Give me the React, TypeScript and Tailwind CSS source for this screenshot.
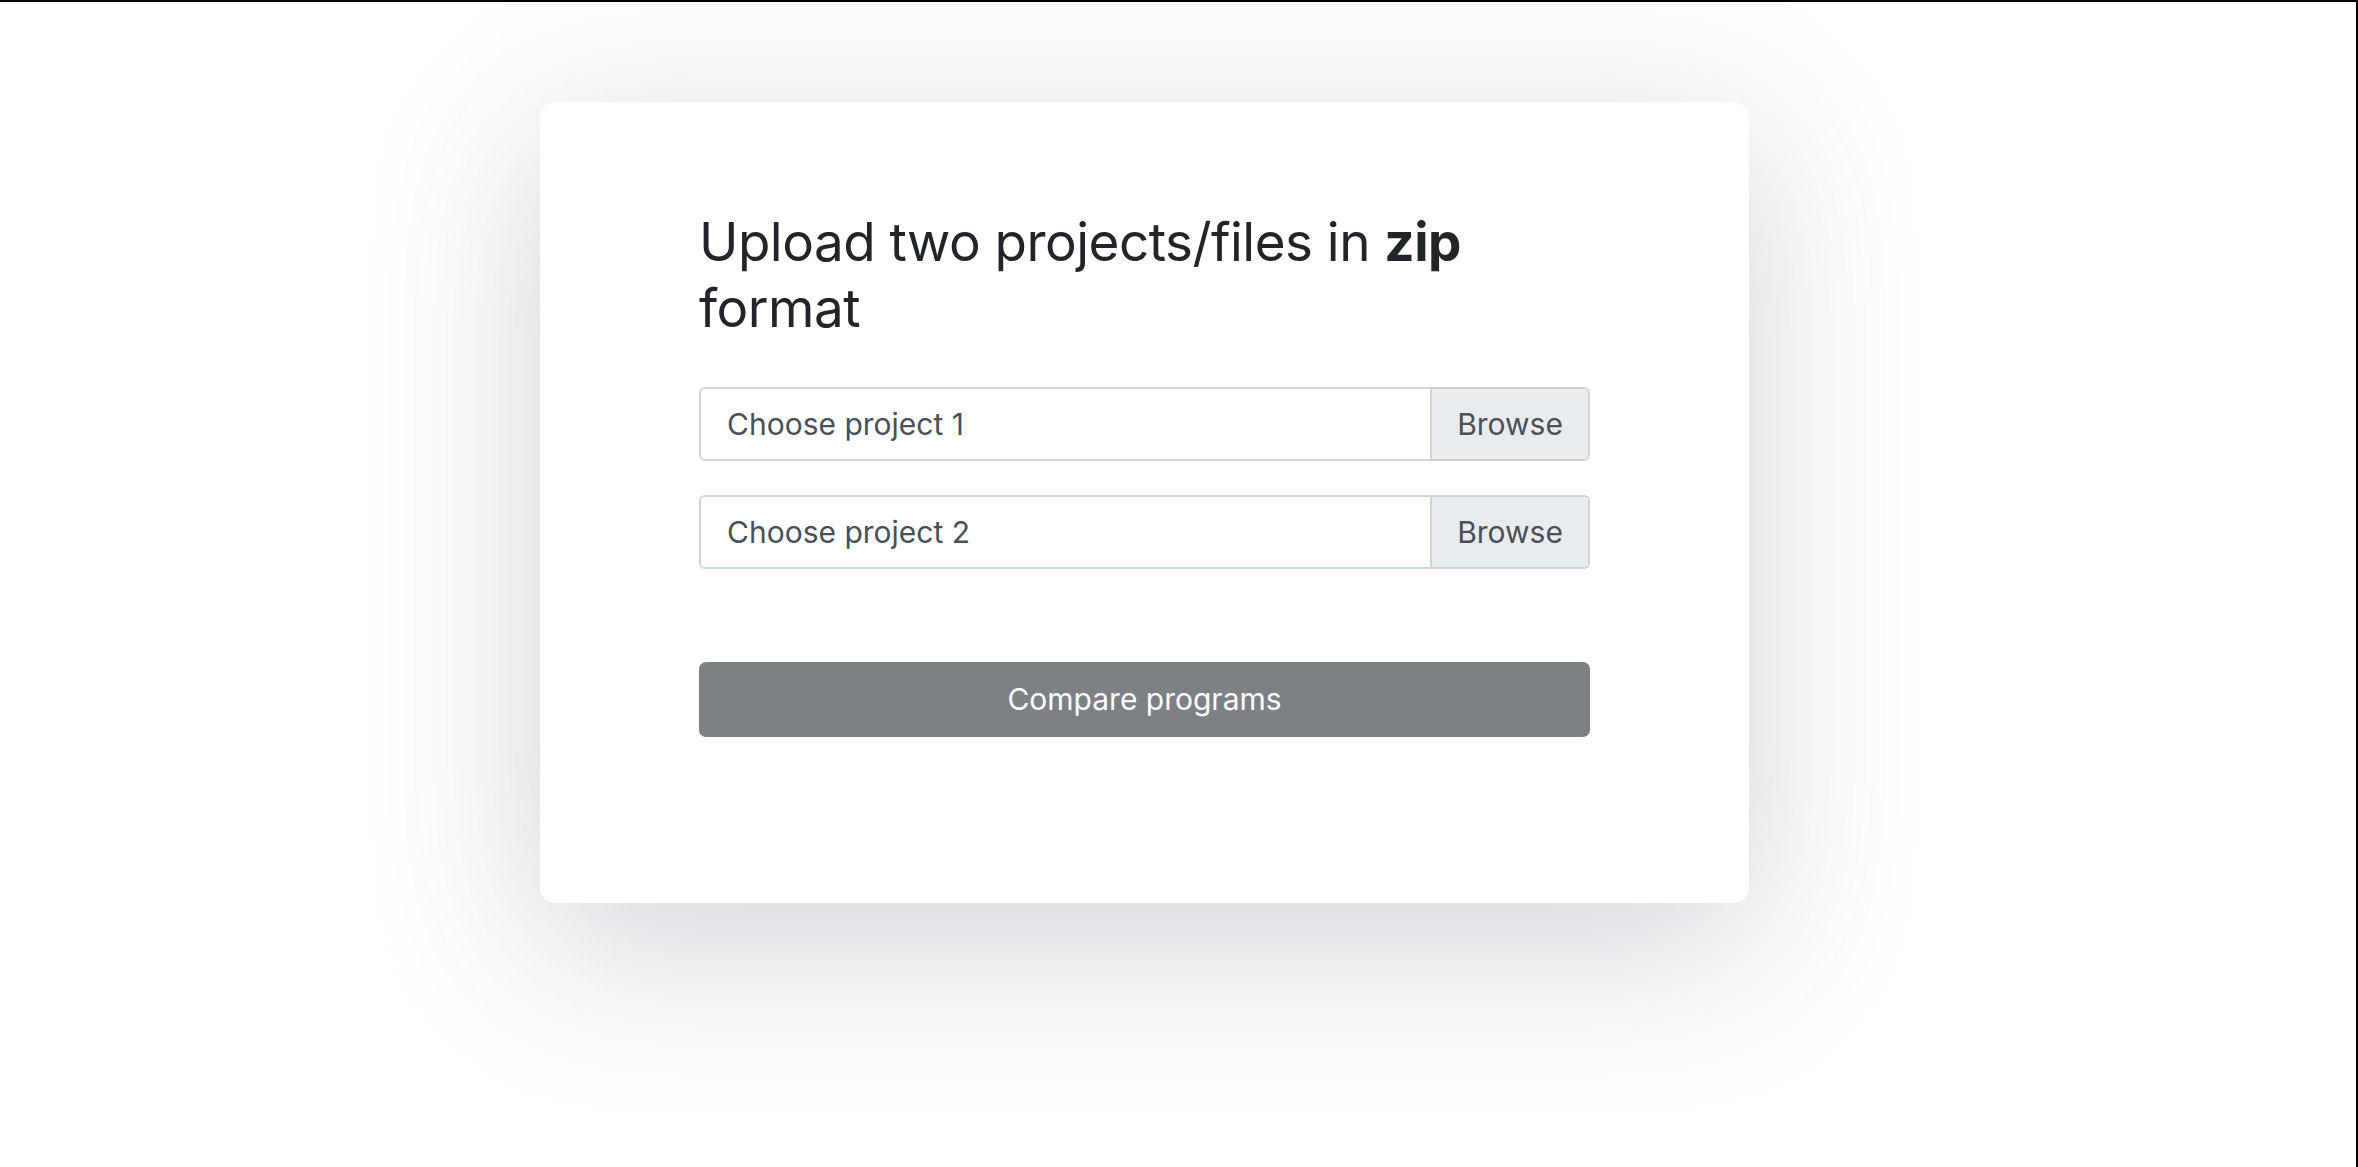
export default function App() {
  return (
    <div className="min-h-[1167px] w-full bg-white border-t-2 border-r-2 border-black font-['Inter',sans-serif]">
      <div className="ml-[540px] mt-[100px] w-[1209px] rounded-[15px] bg-white px-[159px] pt-[107px] pb-[166px] shadow-[0_40px_170px_rgba(60,64,90,0.24)]">
        <h2 className="text-[53px] leading-[66px] text-[#212529] tracking-[-0.01em]">
          Upload two projects/files in <b className="font-bold">zip</b> format
        </h2>

        <div className="mt-[46px] flex flex-col gap-[34px]">
          {["Choose project 1", "Choose project 2"].map((label) => (
            <div
              key={label}
              className="flex h-[74px] overflow-hidden rounded-[6px] border-2 border-[#ced4da] text-[30px] text-[#495057]"
            >
              <div className="flex flex-1 items-center px-[26px] bg-white">{label}</div>
              <div className="flex w-[158px] items-center justify-center border-l-2 border-[#ced4da] bg-[#e9ecef]">
                Browse
              </div>
            </div>
          ))}
        </div>

        <button className="mt-[93px] flex h-[75px] w-full items-center justify-center rounded-[7px] bg-[#7d8084] text-[30px] text-white">
          Compare programs
        </button>
      </div>
    </div>
  );
}
